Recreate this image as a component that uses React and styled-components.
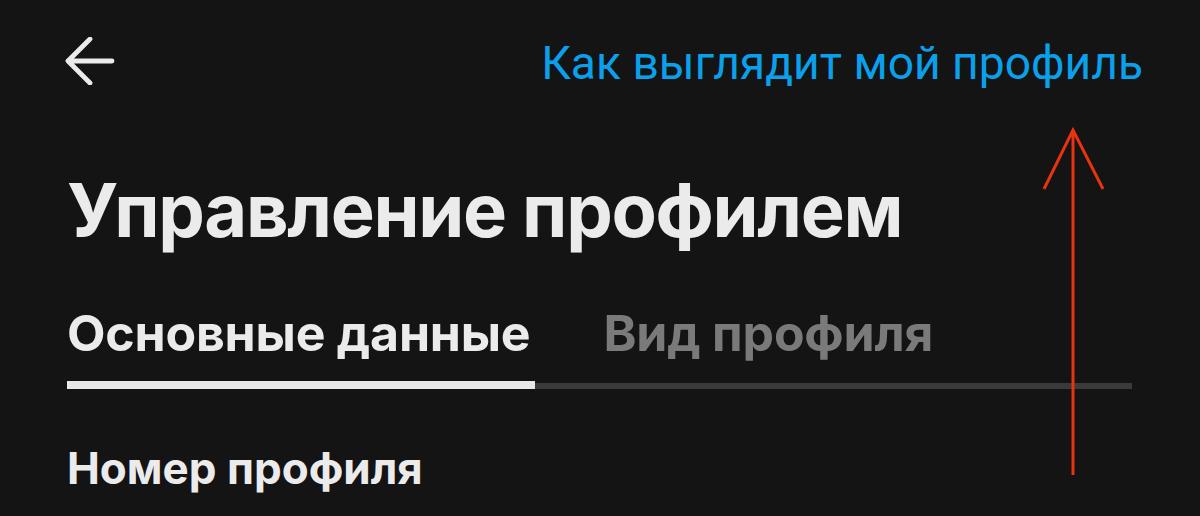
import React from "react";
import styled, { createGlobalStyle } from "styled-components";

const Global = createGlobalStyle`
  html, body { margin: 0; padding: 0; background: #141414; }
  body { font-family: Inter, "Noto Sans", sans-serif; -webkit-font-smoothing: antialiased; }
  * { box-sizing: border-box; }
`;

const Page = styled.div`
  position: relative;
  width: 1200px;
  height: 516px;
  overflow: hidden;
  background: #141414;
  padding: 0 68px 0 67px;
  display: flex;
  flex-direction: column;
`;

const Header = styled.header`
  height: 122px;
  display: flex;
  align-items: center;
  justify-content: space-between;
  margin-right: -11px;
`;

const BackButton = styled.button`
  width: 50px;
  height: 48px;
  margin-left: -2px;
  padding: 0;
  border: 0;
  background: none;
  color: #ebebeb;
  display: flex;
  cursor: pointer;
`;

const PreviewLink = styled.a`
  font-family: Roboto, "Liberation Sans", sans-serif;
  font-size: 46.2px;
  line-height: 54px;
  font-weight: 400;
  color: #0aa0ec;
  text-decoration: none;
  margin-top: 3px;
`;

const Title = styled.h1`
  margin: 48px 0 0;
  font-size: 74px;
  line-height: 80px;
  font-weight: 700;
  color: #ebebeb;
  letter-spacing: -1.3px;
`;

const TabList = styled.div`
  margin-top: 53px;
  display: flex;
  align-items: flex-end;
  gap: 68px;
  box-shadow: inset 0 -6px 0 #3a3a3a;
`;

const Tab = styled.div`
  font-size: 50px;
  line-height: 60px;
  font-weight: 700;
  color: ${(p) => (p.$active ? "#ebebeb" : "#7a7a7a")};
  padding-bottom: ${(p) => (p.$active ? "18px" : "20px")};
  padding-right: ${(p) => (p.$active ? "5px" : "0")};
  border-bottom: ${(p) => (p.$active ? "8px solid #e8e8e8" : "6px solid transparent")};
  letter-spacing: -0.2px;
`;

const FieldLabel = styled.div`
  margin-top: 53px;
  font-size: 44px;
  line-height: 52px;
  font-weight: 700;
  color: #ebebeb;
`;

const Annotation = styled.svg`
  position: absolute;
  left: 0;
  top: 0;
  pointer-events: none;
`;

export default function App() {
  return (
    <>
      <Global />
      <Page>
        <Header>
          <BackButton aria-label="Назад">
            <svg width="50" height="48" viewBox="0 0 50 48" fill="none">
              <path
                d="M47 24H3M25 2L3 24L25 46"
                stroke="currentColor"
                strokeWidth="4.8"
                strokeLinecap="round"
                strokeLinejoin="round"
              />
            </svg>
          </BackButton>
          <PreviewLink href="#">Как выглядит мой профиль</PreviewLink>
        </Header>
        <Title>Управление профилем</Title>
        <TabList>
          <Tab $active>Основные данные</Tab>
          <Tab>Вид профиля</Tab>
        </TabList>
        <FieldLabel>Номер профиля</FieldLabel>
        <Annotation width="1200" height="516" viewBox="0 0 1200 516">
          <path
            d="M1073 130V475M1044 189L1073 130L1103 189"
            stroke="#e8330f"
            strokeWidth="3"
            fill="none"
          />
        </Annotation>
      </Page>
    </>
  );
}
